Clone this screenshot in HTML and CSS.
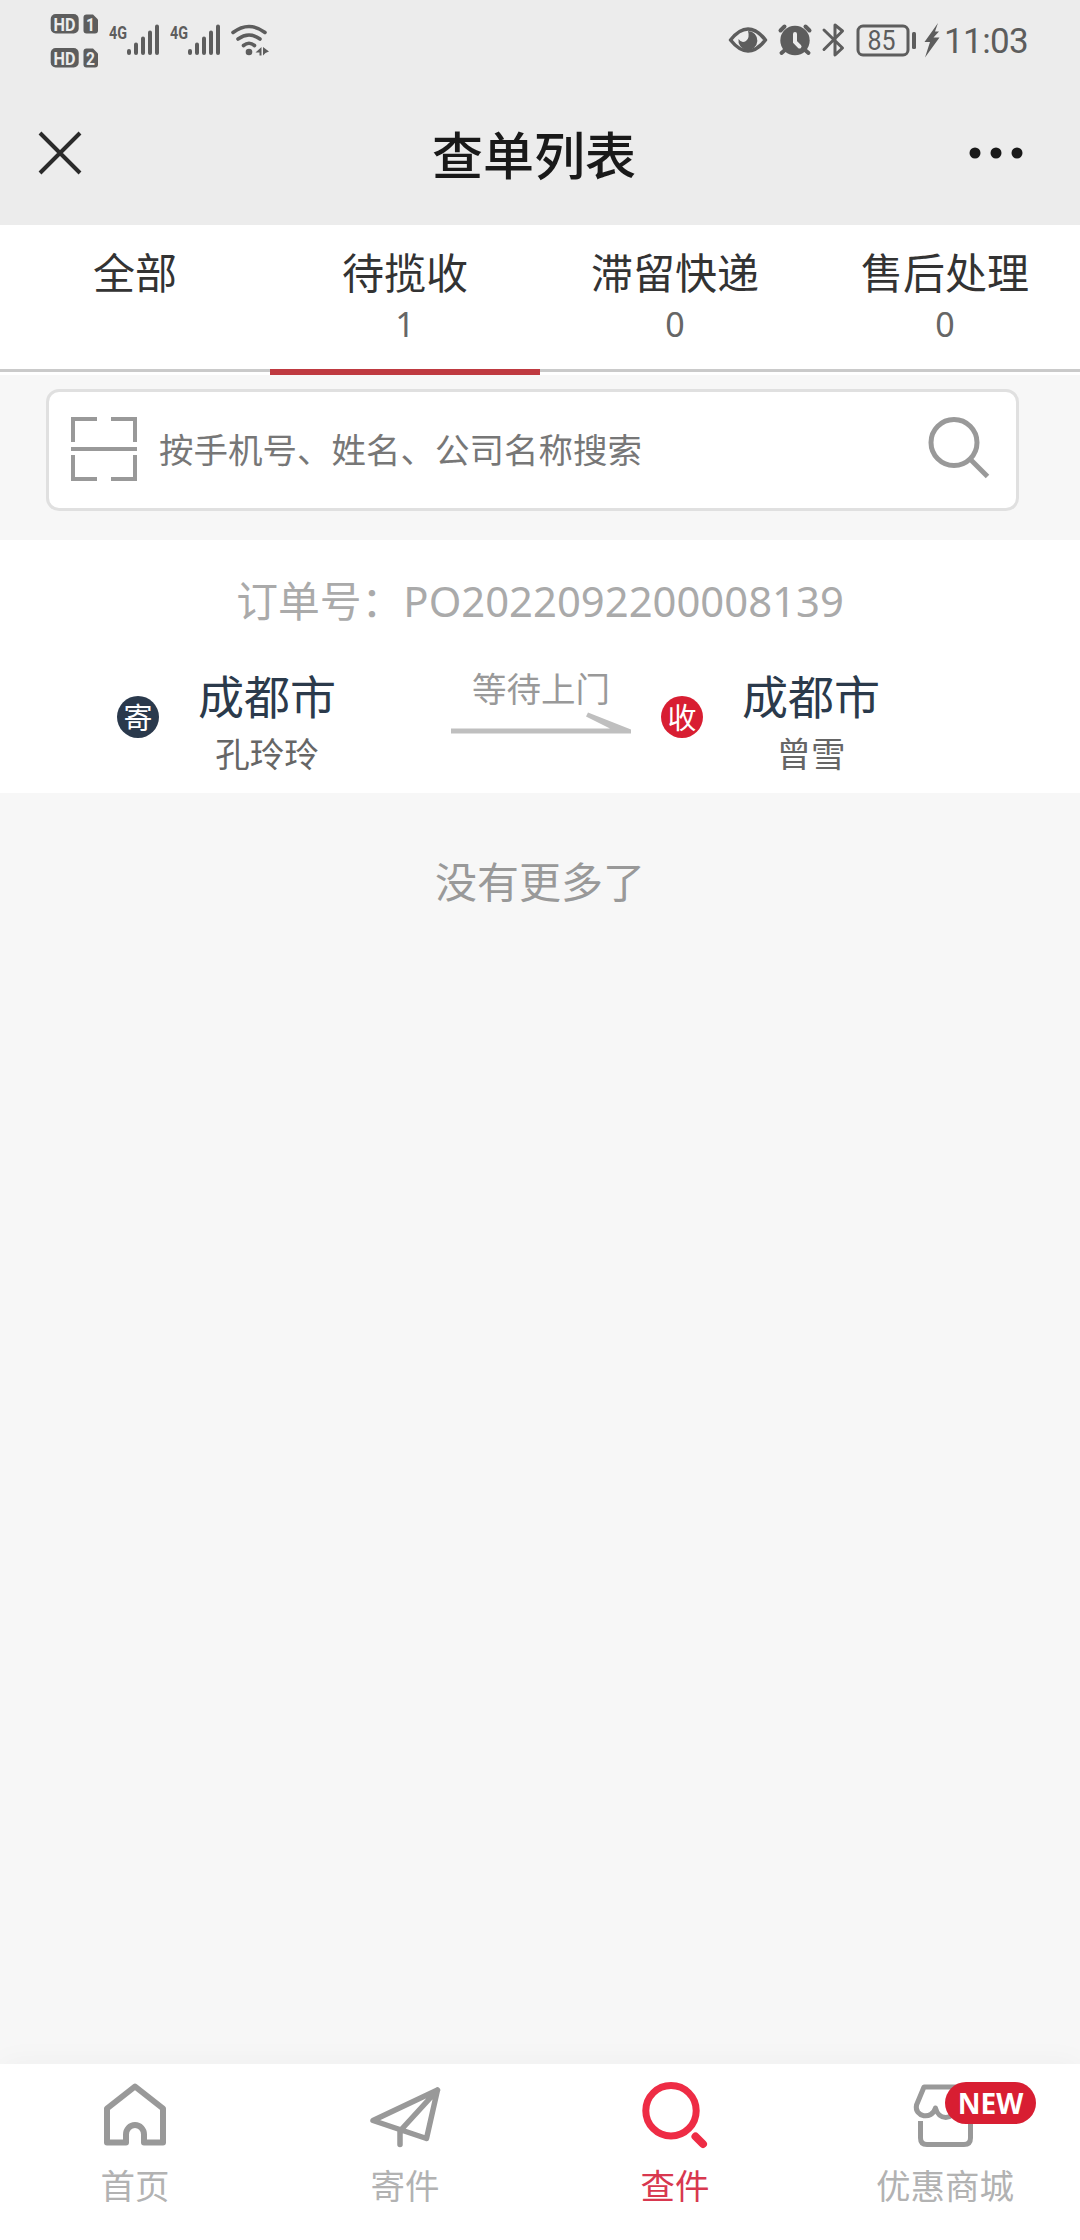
FILE: index.html
```html
<!DOCTYPE html>
<html lang="zh-CN">
<head>
<meta charset="utf-8">
<title>查单列表</title>
<link rel="stylesheet" href="styles.css">
</head>
<body>
<div class="screen">
  <header class="header">
    <div class="status">
      <svg class="status-icon" width="50" height="80" viewBox="50 0 50 80">
        <rect x="50.700" y="14" width="28" height="19.500" rx="5"/>
        <path d="M86.500 14.500h6.500l5 5v11a3 3 0 0 1-3 3h-8.500a3 3 0 0 1-3-3v-13a3 3 0 0 1 3-3z"/>
        <rect x="50.700" y="48" width="28" height="19.500" rx="5"/>
        <path d="M86.500 48.500h6.500l5 5v11a3 3 0 0 1-3 3h-8.500a3 3 0 0 1-3-3v-13a3 3 0 0 1 3-3z"/>
        <text class="chip" x="53.500" y="30.500" textLength="22" lengthAdjust="spacingAndGlyphs">HD</text>
        <text class="chip" x="86" y="30.500" textLength="9" lengthAdjust="spacingAndGlyphs">1</text>
        <text class="chip" x="53.500" y="64.500" textLength="22" lengthAdjust="spacingAndGlyphs">HD</text>
        <text class="chip" x="86" y="64.500" textLength="9" lengthAdjust="spacingAndGlyphs">2</text>
      </svg>
      <svg class="status-icon signal" width="61" height="80" viewBox="109 0 61 80">
        <text class="net" x="109" y="38.500" textLength="18" lengthAdjust="spacingAndGlyphs">4G</text>
        <path class="bars" d="M129 51v2M136 44.500V53M143 38.500V53M150 32.500V53M157 26.500V53"/>
      </svg>
      <svg class="status-icon" width="61" height="80" viewBox="109 0 61 80">
        <text class="net" x="109" y="38.500" textLength="18" lengthAdjust="spacingAndGlyphs">4G</text>
        <path class="bars" d="M129 51v2M136 44.500V53M143 38.500V53M150 32.500V53M157 26.500V53"/>
      </svg>
      <svg class="status-icon" width="40" height="80" viewBox="230 0 40 80">
        <path class="wifi" d="M232 32.500q16-12 32 0M237 39q11-8 22 0M242.500 45.500q5.500-4.500 11 0"/>
        <circle cx="248" cy="52" r="3.300"/>
        <path d="M254.500 52.500l6-5.500v8.500h-2v-3zM262 47l6 4.500-3.500 1.500-2.500 2.500z"/>
      </svg>
      <div class="spacer"></div>
      <svg class="status-icon" width="216" height="80" viewBox="728 0 216 80">
        <path class="eye" d="M730.500 40Q748 18 765.500 40 748 62 730.500 40z"/>
        <path d="M748 31a9.500 9.500 0 1 1-9.500 8q3 4.500 7.500 2 4-3 2-10z"/>
        <circle cx="795" cy="40.500" r="14.700"/>
        <path class="stroke4" d="M785 50l-3.500 3M805 50l3.500 3M780.500 30.500l4-4M809.500 30.500l-4-4"/>
        <path class="cut" d="M795 34v8l4.500 4.500"/>
        <path class="bt" d="M824 30l18.500 18-7.500 7V25l7.500 6L824 49.500"/>
        <rect class="battery" x="858" y="26" width="50" height="29" rx="5"/>
        <rect x="912" y="32" width="4" height="17" rx="1.500"/>
        <text class="level" x="867.500" y="50" textLength="28" lengthAdjust="spacingAndGlyphs">85</text>
        <path d="M938 23l-13.500 19h5.500l-5 15.500 14.500-20h-6l5.500-6h-4z"/>
      </svg>
      <span class="clock">11:03</span>
    </div>
    <div class="nav">
      <svg class="nav-close" width="44" height="44" viewBox="0 0 44 44"><path d="M2 2l40 40M42 2L2 42"/></svg>
      <h1 class="title">查单列表</h1>
      <svg class="nav-more" width="56" height="12" viewBox="0 0 56 12"><circle cx="7" cy="6" r="5.500"/><circle cx="28" cy="6" r="5.500"/><circle cx="49" cy="6" r="5.500"/></svg>
    </div>
  </header>

  <nav class="tabs">
    <div class="tab"><span class="tab-name">全部</span></div>
    <div class="tab active"><span class="tab-name">待揽收</span><span class="tab-count">1</span></div>
    <div class="tab"><span class="tab-name">滞留快递</span><span class="tab-count">0</span></div>
    <div class="tab"><span class="tab-name">售后处理</span><span class="tab-count">0</span></div>
  </nav>

  <main class="content">
    <div class="search">
      <svg width="66" height="66" viewBox="0 0 66 66"><path class="scan" d="M26 2H2v23M40 2h24v23M26 62H2V38M40 62h24V38M0 32h66"/></svg>
      <span class="placeholder">按手机号、姓名、公司名称搜索</span>
      <svg width="62" height="68" viewBox="0 0 62 68"><circle class="lens" cx="26" cy="26.500" r="23"/><path class="lens" d="M42 43l17.500 17.500"/></svg>
    </div>

    <section class="order">
      <p class="order-no">订单号：PO2022092200008139</p>
      <div class="route">
        <span class="badge from">寄</span>
        <div class="place"><span class="city">成都市</span><span class="person">孔玲玲</span></div>
        <div class="progress">
          <span>等待上门</span>
          <svg width="180" height="22" viewBox="0 0 180 22"><path d="M0 16.500h159L135 4.500l2-4 43 17v4H0z"/></svg>
        </div>
        <span class="badge to">收</span>
        <div class="place"><span class="city">成都市</span><span class="person">曾雪</span></div>
      </div>
    </section>
    <p class="end">没有更多了</p>
  </main>

  <footer class="tabbar">
    <div class="item">
      <svg width="76" height="70" viewBox="97 2080 76 70"><path class="line" d="M126 2142.500h-19v-34l28-22 28 22v34h-19v-8a9 9.500 0 0 0-18 0z"/><path class="gap" d="M129 2138h12v9h-12z"/></svg>
      <span>首页</span>
    </div>
    <div class="item">
      <svg width="76" height="70" viewBox="367 2080 76 70"><path class="line thin" d="M373 2120.500l64.500-30.500-11 48.500zM437.500 2090L400 2131v13.500"/></svg>
      <span>寄件</span>
    </div>
    <div class="item current">
      <svg width="76" height="70" viewBox="637 2080 76 70"><circle class="line bold" cx="671" cy="2110.700" r="25.200"/><path class="line handle" d="M695.500 2136.500l7.500 7.500"/></svg>
      <span>查件</span>
    </div>
    <div class="item">
      <svg width="76" height="70" viewBox="907 2080 76 70"><path class="line shop" d="M920.500 2121v17q0 6.500 6.500 6.500h37q6.500 0 6.500-6.500v-17M924 2087h43l8.500 18c2 12-16 15.500-19.500 3-3 12.500-17.500 12.500-20.500 0-3.500 12.500-21.500 9-19-3z"/></svg>
      <span>优惠商城</span>
      <b class="new">NEW</b>
    </div>
  </footer>
</div>
</body>
</html>
```
FILE: styles.css
```css
* { box-sizing: border-box; }
body, h1, p { margin: 0; }
body {
  font-family: "Noto Sans", "Noto Sans CJK SC", sans-serif;
  color: #333;
}
svg { display: block; flex: none; }
.screen {
  width: 1080px;
  height: 2240px;
  display: flex;
  flex-direction: column;
  background: #f7f7f7;
  overflow: hidden;
}

.header { height: 225px; background: #ececec; }
.status { height: 80px; display: flex; align-items: center; padding: 0 50px; }
.status-icon { fill: #5d5d5d; }
.signal { margin-left: 9px; }
.spacer { flex: 1; }
.chip { fill: #ececec; font: bold 18px Roboto, sans-serif; }
.net { fill: #5d5d5d; font: bold 18px Roboto, sans-serif; }
.level { font: 27px Roboto, sans-serif; }
.bars, .wifi, .stroke4, .cut, .bt, .battery, .eye { fill: none; stroke: #5d5d5d; stroke-width: 4; stroke-linecap: round; }
.wifi { stroke-width: 3.600; }
.cut { stroke: #ececec; }
.bt { stroke-width: 3; stroke-linejoin: round; }
.battery { stroke-width: 3; }
.eye { stroke-width: 3.500; stroke-linejoin: round; }
.clock { width: 86px; padding-top: 4px; white-space: nowrap; font: 35px/80px Roboto, sans-serif; letter-spacing: -.6px; color: #5d5d5d; }

.nav { height: 145px; padding: 0 56px 0 38px; display: flex; align-items: flex-start; justify-content: space-between; }
.nav-close { margin-top: 51px; fill: none; stroke: #2a2a2a; stroke-width: 4; }
.nav-more { margin-top: 67px; fill: #191919; }
.title { margin: 36px 0 0 18px; font-size: 51px; line-height: 74px; font-weight: 500; font-family: "Noto Sans CJK SC", sans-serif; color: #191919; }

.tabs { height: 150px; display: grid; grid-template-columns: repeat(4, 1fr); background: linear-gradient(#fff 144px, #cacaca 144px, #cacaca 147px, #fff 147px); }
.tab { display: flex; flex-direction: column; align-items: center; padding-top: 18px; border-bottom: 6px solid transparent; }
.active { border-color: #bf3a41; }
.tab-name { font-size: 42px; line-height: 60px; }
.tab-count { font-size: 34px; line-height: 42px; color: #666; }

.content { flex: 1; display: flex; flex-direction: column; }
.search {
  margin: 14px 61px 29px 46px;
  height: 122px;
  flex: none;
  border: 3px solid #e0e0e0;
  border-radius: 13px;
  background: #fff;
  display: flex;
  align-items: center;
  padding: 0 26px 0 22px;
}
.scan { fill: none; stroke: #999; stroke-width: 4; }
.lens { fill: none; stroke: #999; stroke-width: 5; }
.placeholder { flex: 1; margin-left: 22px; font-size: 34.500px; line-height: 50px; color: #777; }

.order { height: 253px; background: #fff; flex: none; }
.order-no { padding-top: 31px; font-size: 41.800px; line-height: 60px; text-align: center; color: #aaa; }
.route { margin-top: 34px; padding-left: 117px; display: flex; align-items: flex-start; }
.badge { width: 42px; height: 42px; margin-top: 31px; border-radius: 50%; color: #fff; font-size: 29px; line-height: 43px; text-align: center; }
.from { background: #2a394c; }
.to { background: #d81e32; }
.place { width: 140px; margin-left: 38px; display: flex; flex-direction: column; align-items: center; white-space: nowrap; }
.city { margin-top: 1px; font-size: 46px; line-height: 60px; color: #2b3a4b; }
.person { margin-top: 3px; font-size: 34.500px; line-height: 50px; color: #666; }
.progress { width: 180px; margin: -1px 30px 0 114px; display: flex; flex-direction: column; align-items: center; font-size: 34.500px; line-height: 50px; color: #999; }
.progress svg { fill: #bfbfbf; margin-top: -2px; }
.end { margin-top: 59px; text-align: center; font-size: 42px; line-height: 60px; color: #999; }

.tabbar { height: 176px; background: #fff; box-shadow: 0 0 30px rgba(0, 0, 0, .04); display: grid; grid-template-columns: repeat(4, 1fr); }
.item { position: relative; display: flex; flex-direction: column; align-items: center; padding-top: 16px; font-size: 34.500px; line-height: 50px; color: #b2b2b2; }
.item span { margin-top: 11px; }
.current { color: #d8384f; }
.line { fill: none; stroke: #999; stroke-width: 6; stroke-linejoin: round; stroke-linecap: round; }
.gap { fill: #fff; }
.thin { stroke-width: 5.500; }
.bold { stroke: #ee2c45; stroke-width: 7; }
.handle { stroke: #ee2c45; stroke-width: 8; }
.shop { stroke-width: 5; stroke-linecap: butt; }
.new { position: absolute; left: 135px; top: 18px; width: 91px; height: 42px; border-radius: 21px; background: #d81e32; color: #fff; font: bold 28px/42px "Open Sans", sans-serif; text-align: center; }
```
